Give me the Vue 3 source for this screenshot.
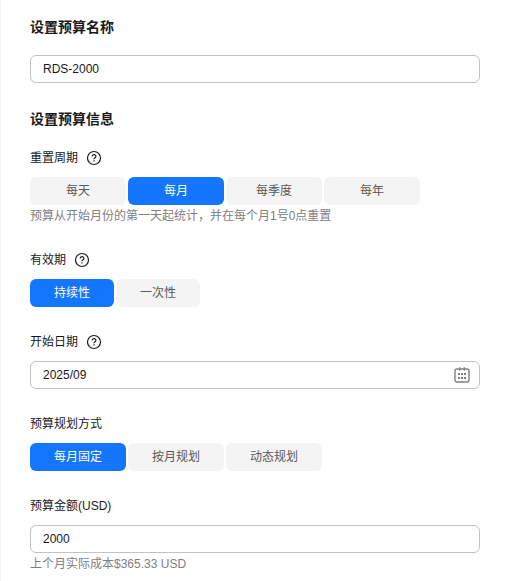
<script setup>
import { ref } from 'vue'

const budgetName = ref('RDS-2000')
const startDate = ref('2025/09')
const amount = ref('2000')

const periods = ['每天', '每月', '每季度', '每年']
const validities = ['持续性', '一次性']
const plans = ['每月固定', '按月规划', '动态规划']

const period = ref('每月')
const validity = ref('持续性')
const plan = ref('每月固定')
</script>

<template>
  <div class="budget-form">
    <h3 class="title">设置预算名称</h3>
    <div class="field">
      <input v-model="budgetName" class="input" type="text" />
    </div>

    <h3 class="title title-info">设置预算信息</h3>

    <div class="field">
      <div class="label">
        <span>重置周期</span>
        <svg class="help" viewBox="0 0 16 16">
          <circle cx="8" cy="8" r="6.5" />
          <path d="M6.1 6.6C6.1 4.1 9.9 4.1 9.9 6.5C9.9 7.9 8 7.8 8 9.3" />
          <path d="M8 10.3V11.6" />
        </svg>
      </div>
      <div class="tabs">
        <button
          v-for="item in periods"
          :key="item"
          class="tab"
          :class="{ active: item === period }"
          @click="period = item"
        >{{ item }}</button>
      </div>
      <div class="hint">预算从开始月份的第一天起统计，并在每个月1号0点重置</div>
    </div>

    <div class="field">
      <div class="label">
        <span>有效期</span>
        <svg class="help" viewBox="0 0 16 16">
          <circle cx="8" cy="8" r="6.5" />
          <path d="M6.1 6.6C6.1 4.1 9.9 4.1 9.9 6.5C9.9 7.9 8 7.8 8 9.3" />
          <path d="M8 10.3V11.6" />
        </svg>
      </div>
      <div class="tabs">
        <button
          v-for="item in validities"
          :key="item"
          class="tab tab-small"
          :class="{ active: item === validity }"
          @click="validity = item"
        >{{ item }}</button>
      </div>
    </div>

    <div class="field">
      <div class="label">
        <span>开始日期</span>
        <svg class="help" viewBox="0 0 16 16">
          <circle cx="8" cy="8" r="6.5" />
          <path d="M6.1 6.6C6.1 4.1 9.9 4.1 9.9 6.5C9.9 7.9 8 7.8 8 9.3" />
          <path d="M8 10.3V11.6" />
        </svg>
      </div>
      <div class="input date">
        <span>{{ startDate }}</span>
        <svg class="calendar" viewBox="0 0 16 16">
          <rect x="1" y="2" width="14" height="13" rx="2" />
          <path d="M5.7 0.3V3.8M10.3 0.3V3.8" />
          <path class="dots" d="M4 7H6M7 7H9M10 7H12M4 11H6M7 11H9M10 11H12" />
        </svg>
      </div>
    </div>

    <div class="field">
      <div class="label">预算规划方式</div>
      <div class="tabs">
        <button
          v-for="item in plans"
          :key="item"
          class="tab"
          :class="{ active: item === plan }"
          @click="plan = item"
        >{{ item }}</button>
      </div>
    </div>

    <div class="field">
      <div class="label">预算金额(USD)</div>
      <input v-model="amount" class="input" type="text" />
      <div class="hint">上个月实际成本$365.33 USD</div>
    </div>
  </div>
</template>

<style>
body {
  margin: 0;
  background: #fff;
  overflow: hidden;
}
</style>

<style scoped>
.budget-form {
  box-sizing: border-box;
  height: 581px;
  padding: 17px 27px 0 29px;
  border-left: 1px solid #f2f2f2;
  overflow: hidden;
  color: #191919;
  font-family: "Liberation Sans", "Noto Sans CJK SC", sans-serif;
  font-size: 12px;
  line-height: 18px;
}

.title {
  margin: 0 0 18px;
  height: 20px;
  font-size: 14px;
  font-weight: 700;
  line-height: 20px;
}

.title-info {
  margin-bottom: 20px;
}

.field {
  margin-bottom: 26px;
}

.label {
  display: flex;
  align-items: center;
  gap: 8px;
  height: 18px;
  margin-bottom: 10px;
}

.help {
  width: 16px;
  height: 16px;
  fill: none;
  stroke: #191919;
  stroke-width: 1.2;
}

.input {
  display: block;
  box-sizing: border-box;
  width: 100%;
  height: 28px;
  padding: 0 12px;
  border: 1px solid #c2c2c2;
  border-radius: 6px;
  outline: none;
  background: #fff;
  color: #191919;
  font: inherit;
}

.date {
  display: flex;
  align-items: center;
  justify-content: space-between;
  padding-right: 9px;
}

.calendar {
  width: 16px;
  height: 16px;
  fill: none;
  stroke: #808080;
  stroke-width: 1.4;
}

.calendar .dots {
  stroke-width: 2;
}

.tabs {
  display: flex;
  gap: 2px;
}

.tab {
  width: 96px;
  height: 28px;
  padding: 0;
  border: none;
  border-radius: 6px;
  background: #f4f4f4;
  color: #595959;
  font: inherit;
  cursor: pointer;
}

.tab-small {
  width: 84px;
}

.tab.active {
  background: #1476ff;
  color: #fff;
}

.hint {
  height: 18px;
  margin-top: 2px;
  color: #808080;
}
</style>
